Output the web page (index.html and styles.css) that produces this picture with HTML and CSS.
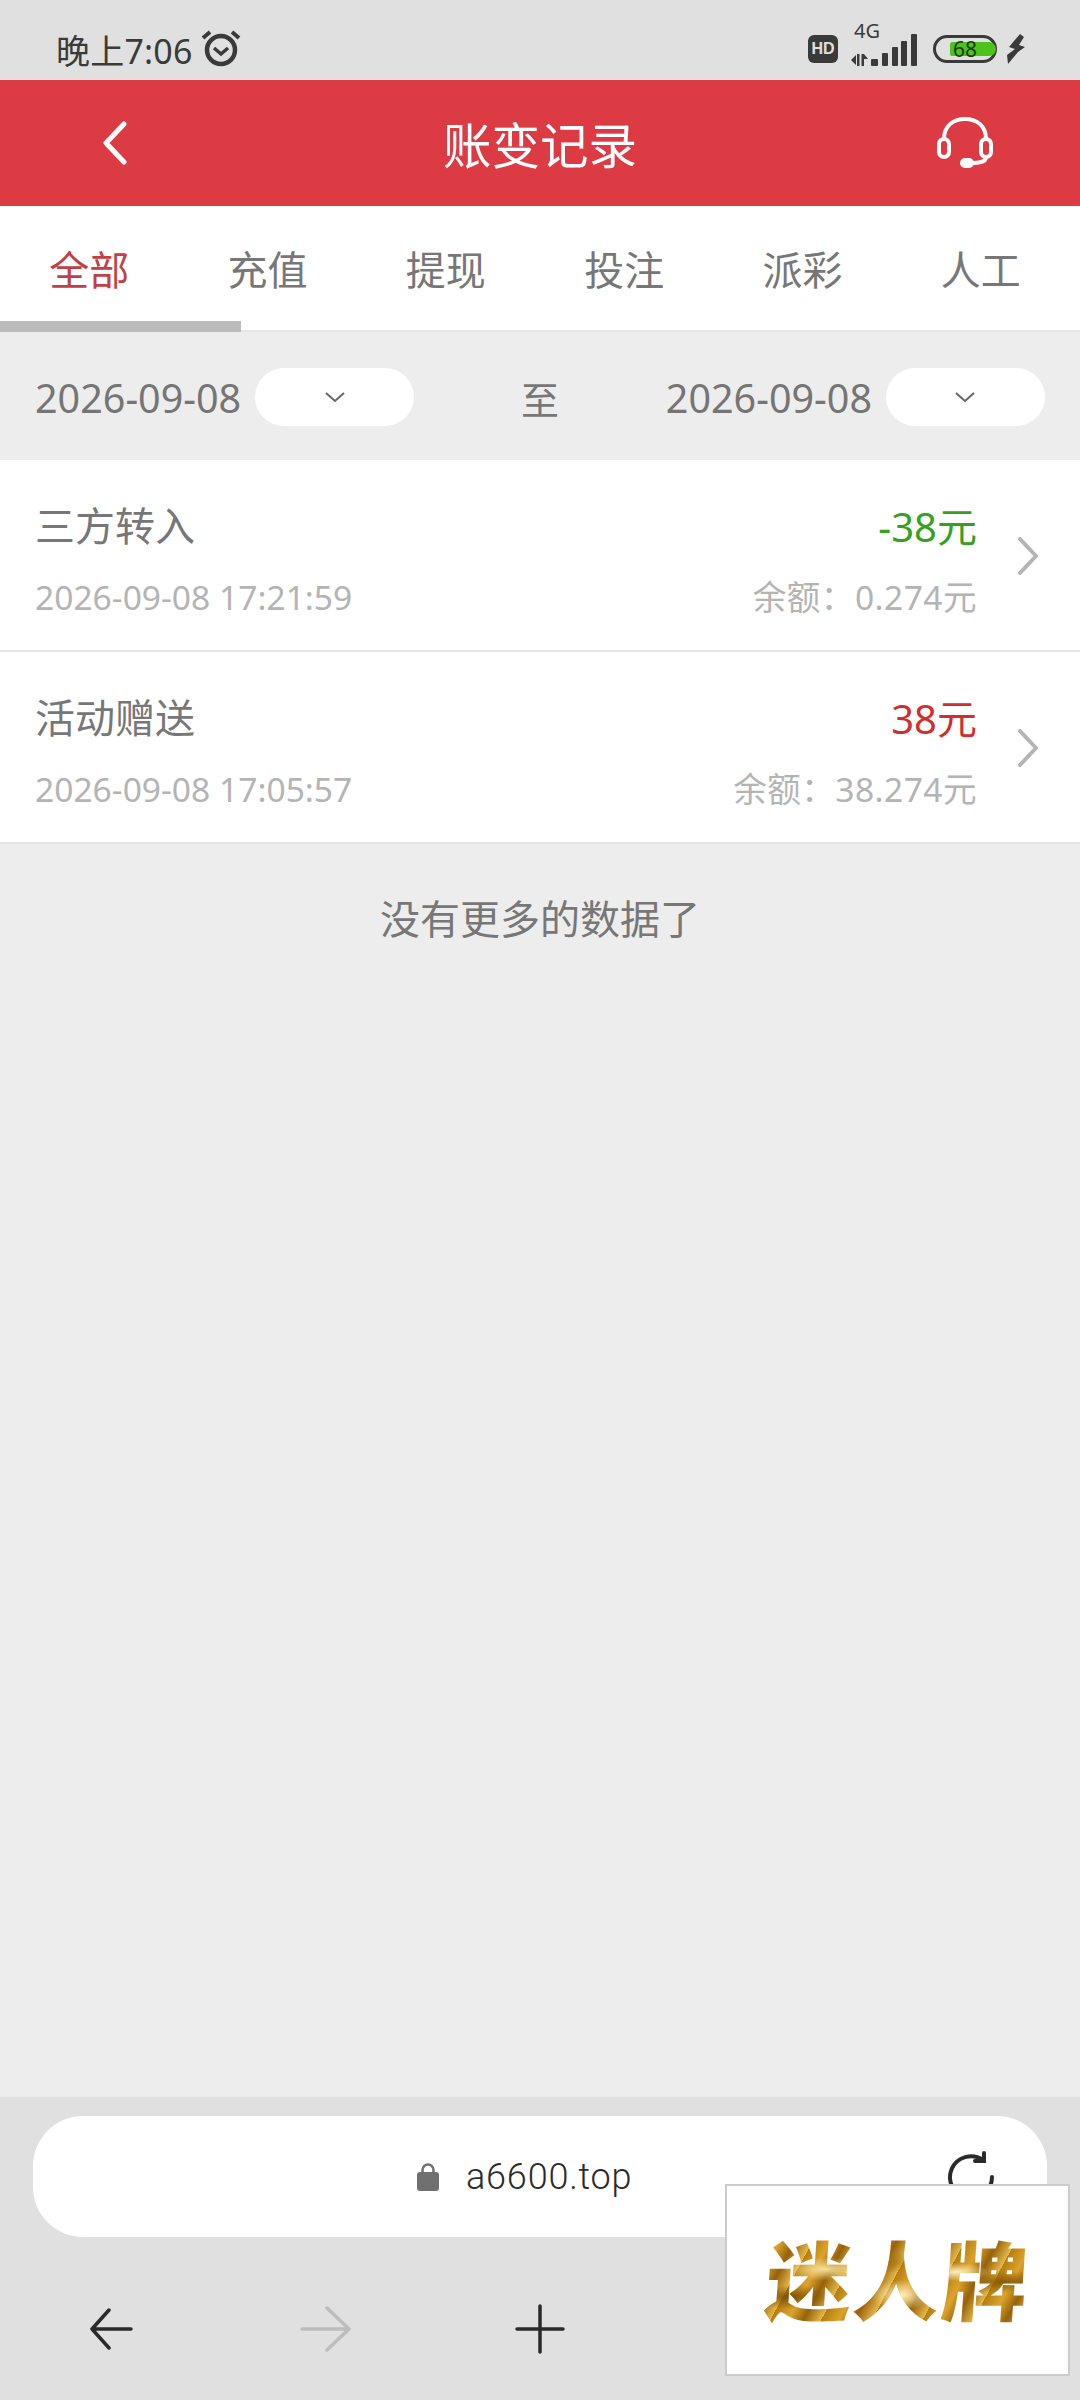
FILE: index.html
```html
<!DOCTYPE html>
<html lang="zh">
<head>
    <meta charset="UTF-8">
    <meta name="viewport" content="width=device-width, initial-scale=1.0">
    <title>账变记录</title>
    <link rel="stylesheet" href="styles.css">
</head>
<body>

    <!-- 状态栏 -->
    <div class="status-bar">
        <div class="status-left">
            <span class="status-time">晚上7:06</span>
            <svg class="icon-alarm" width="40" height="40" viewBox="0 0 40 40" fill="none" stroke="#3a3a3a">
                <circle cx="20" cy="22" r="14" stroke-width="4.500"/>
                <path d="M13 20l7 6 7-6" stroke-width="3.500"/>
                <path d="M2 10l7-6M38 10l-7-6" stroke-width="4"/>
            </svg>
        </div>
        <div class="status-right">
            <span class="hd-badge">HD</span>
            <div class="signal">
                <span class="signal-label">4G</span>
                <svg class="signal-bars" width="66" height="32" viewBox="0 0 66 32" fill="#3a3a3a">
                    <path d="M0 26l5-5v10zM6 20h2.500v12H6zM10.500 20H13v12h-2.500zM13 20l4 5h-4z"/>
                    <rect x="20" y="25" width="7" height="7" rx="1"/>
                    <rect x="31" y="19" width="6" height="13" rx="1"/>
                    <rect x="41" y="13" width="6" height="19" rx="1"/>
                    <rect x="50" y="7" width="6" height="25" rx="1"/>
                    <rect x="60" y="0" width="6" height="32" rx="1"/>
                </svg>
            </div>
            <div class="battery">
                <div class="battery-fill"></div>
                <span class="battery-num">68</span>
            </div>
            <svg class="icon-bolt" width="18" height="30" viewBox="0 0 18 30" fill="#3a3a3a">
                <path d="M13 0L2 13l6 2-8 6 1 9 10-12 7-5-6-2 5-8z"/>
            </svg>
        </div>
    </div>

    <!-- 顶部标题 -->
    <div class="header">
        <svg class="icon-back" width="24" height="44" viewBox="0 0 24 44" fill="none" stroke="#fff" stroke-width="5" stroke-linecap="round" stroke-linejoin="round">
            <path d="M21 3L3 22l18 19"/>
        </svg>
        <h1 class="header-title">账变记录</h1>
        <svg class="icon-service" width="56" height="52" viewBox="0 0 56 52" fill="none" stroke="#fff" stroke-width="4">
            <path d="M7 22C7 9 16 2 28 2s21 7 21 20"/>
            <rect x="2" y="22" width="10" height="18" rx="5"/>
            <rect x="44" y="22" width="10" height="18" rx="5"/>
            <path d="M49 40c0 5-6 6-16 6"/>
            <rect x="25" y="43" width="10" height="6" rx="3" fill="#fff"/>
        </svg>
    </div>

    <!-- 分类 -->
    <div class="tabs">
        <div class="tab active">全部</div>
        <div class="tab">充值</div>
        <div class="tab">提现</div>
        <div class="tab">投注</div>
        <div class="tab">派彩</div>
        <div class="tab">人工</div>
        <div class="tab-bar"></div>
    </div>

    <!-- 日期筛选 -->
    <div class="filter">
        <div class="date-group">
            <span class="date-text">2026-09-08</span>
            <div class="date-pill">
                <svg width="20" height="12" viewBox="0 0 20 12" fill="none" stroke="#666" stroke-width="2"><path d="M1 2l9 8 9-8"/></svg>
            </div>
        </div>
        <span class="date-to">至</span>
        <div class="date-group">
            <span class="date-text">2026-09-08</span>
            <div class="date-pill">
                <svg width="20" height="12" viewBox="0 0 20 12" fill="none" stroke="#666" stroke-width="2"><path d="M1 2l9 8 9-8"/></svg>
            </div>
        </div>
    </div>

    <!-- 列表 -->
    <div class="content">
        <div class="record">
            <div class="record-main">
                <div class="record-line">
                    <span class="record-name">三方转入</span>
                    <span class="record-money out">-38元</span>
                </div>
                <div class="record-line">
                    <span class="record-sub">2026-09-08 17:21:59</span>
                    <span class="record-sub balance">余额：0.274元</span>
                </div>
            </div>
            <svg class="record-arrow" width="20" height="38" viewBox="0 0 20 38" fill="none" stroke="#b4b4b4" stroke-width="4" stroke-linecap="round" stroke-linejoin="round"><path d="M2 2l16 17L2 36"/></svg>
        </div>
        <div class="record">
            <div class="record-main">
                <div class="record-line">
                    <span class="record-name">活动赠送</span>
                    <span class="record-money in">38元</span>
                </div>
                <div class="record-line">
                    <span class="record-sub">2026-09-08 17:05:57</span>
                    <span class="record-sub balance">余额：38.274元</span>
                </div>
            </div>
            <svg class="record-arrow" width="20" height="38" viewBox="0 0 20 38" fill="none" stroke="#b4b4b4" stroke-width="4" stroke-linecap="round" stroke-linejoin="round"><path d="M2 2l16 17L2 36"/></svg>
        </div>
        <p class="no-more">没有更多的数据了</p>
    </div>

    <!-- 浏览器底栏 -->
    <div class="browser-bar">
        <div class="address">
            <svg class="icon-lock" width="22" height="28" viewBox="0 0 22 28">
                <path d="M5.500 12V7a5.500 5.500 0 0 1 11 0v5" fill="none" stroke="#707070" stroke-width="2.500"/>
                <rect x="0" y="9" width="22" height="19" rx="3" fill="#707070"/>
            </svg>
            <span class="address-text">a6600.top</span>
            <svg class="icon-refresh" width="52" height="52" viewBox="0 0 52 52" fill="none" stroke="#2a2a2a" stroke-width="4" stroke-linecap="round">
                <path d="M47 26a21 21 0 1 1-9-17"/>
                <path d="M39 2v8h-9"/>
            </svg>
        </div>
        <div class="browser-nav">
            <svg class="nav-back" width="44" height="42" viewBox="0 0 44 42" fill="none" stroke="#2a2a2a" stroke-width="3.500" stroke-linecap="round" stroke-linejoin="round"><path d="M42 21H3M20 2L3 21l17 19"/></svg>
            <svg class="nav-forward" width="52" height="46" viewBox="0 0 52 46" fill="none" stroke="#bdbdbd" stroke-width="3.500" stroke-linecap="round" stroke-linejoin="round"><path d="M2 23h47M27 2l22 21-22 21"/></svg>
            <svg class="nav-add" width="50" height="50" viewBox="0 0 50 50" fill="none" stroke="#2a2a2a" stroke-width="3.500" stroke-linecap="round"><path d="M25 2v46M2 25h46"/></svg>
        </div>
    </div>

    <!-- 水印 -->
    <div class="badge">
        <span class="badge-text">迷人牌</span>
    </div>

</body>
</html>
```

FILE: styles.css
```css
* {
    margin: 0;
    padding: 0;
    box-sizing: border-box;
}

html, body {
    width: 1080px;
    height: 2400px;
    overflow: hidden;
}

body {
    position: relative;
    display: flex;
    flex-direction: column;
    font-family: "Noto Sans", "Noto Sans CJK SC", sans-serif;
    background-color: #ededed;
    color: #777;
}

.status-bar {
    height: 80px;
    flex: none;
    padding: 18px 55px 0 56px;
    display: flex;
    justify-content: space-between;
    align-items: center;
    background-color: #e0e0e0;
    color: #3a3a3a;
}

.status-left {
    display: flex;
    align-items: center;
    gap: 8px;
}

.status-time {
    font-size: 34px;
    letter-spacing: 0.2px;
}

.icon-alarm {
    margin-top: -2px;
}

.status-right {
    display: flex;
    align-items: center;
}

.hd-badge {
    width: 30px;
    height: 28px;
    border-radius: 6px;
    background-color: #3a3a3a;
    color: #e0e0e0;
    font-family: "Liberation Sans", sans-serif;
    font-size: 16px;
    font-weight: 700;
    line-height: 28px;
    text-align: center;
}

.signal {
    position: relative;
    width: 66px;
    height: 32px;
    margin: 2px 0 0 13px;
}

.signal-label {
    position: absolute;
    left: 3px;
    top: -13px;
    font-size: 20px;
    line-height: 20px;
}

.signal-bars {
    display: block;
}

.battery {
    position: relative;
    width: 64px;
    height: 28px;
    margin-left: 16px;
    padding: 4px;
    border: 3px solid #3a3a3a;
    border-radius: 14px;
}

.battery-fill {
    width: 46px;
    height: 14px;
    margin-left: 10px;
    border-radius: 3px 8px 8px 3px;
    background-color: #4cc21a;
}

.battery-num {
    position: absolute;
    left: 0;
    right: 0;
    top: 0;
    font-size: 21px;
    line-height: 22px;
    text-align: center;
    color: #1c3a10;
}

.icon-bolt {
    margin-left: 10px;
}

.header {
    height: 126px;
    flex: none;
    padding: 0 87px;
    display: grid;
    grid-template-columns: 1fr auto 1fr;
    align-items: center;
    background-color: #dc3b44;
}

.icon-back {
    margin-left: 16px;
}

.icon-service {
    justify-self: end;
}

.header-title {
    font-size: 48.500px;
    font-weight: 400;
    color: #fff;
    font-family: "Noto Sans CJK SC", sans-serif;
}

.tabs {
    position: relative;
    height: 126px;
    flex: none;
    padding-right: 10px;
    display: grid;
    grid-template-columns: repeat(6, 1fr);
    align-items: center;
    background-color: #fff;
    border-bottom: 2px solid #e6e6e6;
}

.tab {
    font-size: 40px;
    text-align: center;
    font-family: "Noto Sans CJK SC", sans-serif;
}

.tab.active {
    color: #c23f46;
}

.tab-bar {
    position: absolute;
    left: 0;
    bottom: -2px;
    width: 241px;
    height: 11px;
    background-color: #bbb;
}

.filter {
    height: 128px;
    flex: none;
    padding: 3px 35px 0;
    display: flex;
    justify-content: space-between;
    align-items: center;
}

.date-group {
    display: flex;
    align-items: center;
    gap: 14px;
}

.date-text {
    font-size: 39.500px;
    color: #757575;
}

.date-pill {
    width: 159px;
    height: 58px;
    margin-bottom: 2px;
    display: flex;
    justify-content: center;
    align-items: center;
    background-color: #fff;
    border-radius: 29px;
}

.date-to {
    font-size: 38px;
    font-family: "Noto Sans CJK SC", sans-serif;
}

.content {
    flex: 1;
}

.record {
    height: 192px;
    padding: 5px 42px 0 35px;
    display: flex;
    align-items: center;
    gap: 41px;
    background-color: #fff;
    border-bottom: 2px solid #e4e4e4;
}

.record-main {
    flex: 1;
}

.record-line {
    display: flex;
    justify-content: space-between;
    align-items: center;
}

.record-line + .record-line {
    margin-top: 21px;
}

.record-name {
    font-size: 40px;
    line-height: 52px;
    font-family: "Noto Sans CJK SC", sans-serif;
}

.record-money {
    padding-top: 5px;
    font-size: 40px;
    line-height: 52px;
}

.record-money.out {
    color: #36a11e;
}

.record-money.in {
    color: #d12f2f;
}

.record-sub {
    font-size: 33.600px;
    line-height: 46px;
    color: #b4b4b4;
}

.record-sub.balance {
    letter-spacing: 0.45px;
}

.record-arrow {
    margin-top: -4px;
}

.no-more {
    margin-top: 44px;
    font-size: 40px;
    line-height: 58px;
    text-align: center;
    font-family: "Noto Sans CJK SC", sans-serif;
}

.browser-bar {
    height: 303px;
    flex: none;
    padding: 19px 33px 0;
    background-color: #e0e0e0;
}

.address {
    height: 121px;
    padding: 0 50px 0 384px;
    display: flex;
    align-items: center;
    background-color: #fff;
    border-radius: 50px;
}

.address-text {
    margin-left: 27px;
    font-family: Roboto, sans-serif;
    font-size: 36px;
    font-weight: 300;
    letter-spacing: 0.8px;
    color: #2a2a2a;
}

.icon-refresh {
    margin-left: auto;
}

.browser-nav {
    margin-top: 67px;
    padding-left: 56px;
    display: flex;
    align-items: center;
}

.nav-forward {
    margin-left: 167px;
}

.nav-add {
    margin-left: 163px;
}

/* 右下角水印 */
.badge {
    position: absolute;
    left: 725px;
    top: 2184px;
    width: 345px;
    height: 192px;
    display: flex;
    justify-content: center;
    align-items: center;
    background-color: #fff;
    border: 2px solid #ccc;
}

.badge-text {
    margin-bottom: 6px;
    font-family: "Noto Sans CJK SC", sans-serif;
    font-size: 86px;
    font-weight: 900;
    line-height: 100px;
    letter-spacing: 2px;
    transform: skewX(-4deg);
    color: transparent;
    background:
        radial-gradient(ellipse at 22% 42%, #f8e09a 0, rgba(248, 224, 154, 0) 14%),
        radial-gradient(ellipse at 10% 70%, #7d4f06 0, rgba(125, 79, 6, 0) 12%),
        radial-gradient(ellipse at 45% 35%, #a8700c 0, rgba(168, 112, 12, 0) 12%),
        radial-gradient(ellipse at 52% 68%, #ffedb8 0, rgba(255, 237, 184, 0) 16%),
        radial-gradient(ellipse at 72% 45%, #fff0c0 0, rgba(255, 240, 192, 0) 12%),
        radial-gradient(ellipse at 90% 55%, #8a5a08 0, rgba(138, 90, 8, 0) 14%),
        repeating-linear-gradient(115deg, #b57d10 0, #dca32c 16px, #96620a 30px, #e6b84a 46px);
    -webkit-background-clip: text;
    background-clip: text;
}
```
